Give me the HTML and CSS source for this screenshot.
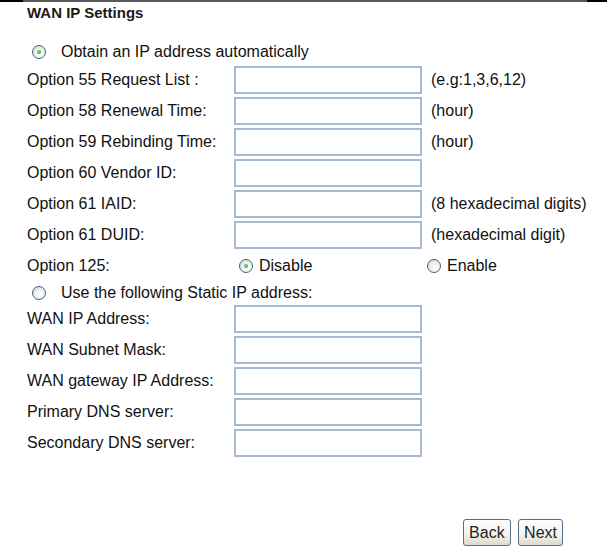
FILE: index.html
```html
<!DOCTYPE html>
<html lang="en">
<head>
    <meta charset="UTF-8">
    <title>WAN IP Settings</title>
    <link rel="stylesheet" href="styles.css">
</head>
<body>

<div class="topline"><div class="topline-inner"></div></div>

<div class="page">
    <div class="title">WAN IP Settings</div>

    <div class="radio-row first">
        <span class="radio checked"></span>
        <span class="radio-text">Obtain an IP address automatically</span>
    </div>

    <div class="row">
        <label>Option 55 Request List :</label>
        <input type="text">
        <span class="hint">(e.g:1,3,6,12)</span>
    </div>
    <div class="row">
        <label>Option 58 Renewal Time:</label>
        <input type="text">
        <span class="hint">(hour)</span>
    </div>
    <div class="row">
        <label>Option 59 Rebinding Time:</label>
        <input type="text">
        <span class="hint">(hour)</span>
    </div>
    <div class="row">
        <label>Option 60 Vendor ID:</label>
        <input type="text">
        <span class="hint"></span>
    </div>
    <div class="row">
        <label>Option 61 IAID:</label>
        <input type="text">
        <span class="hint">(8 hexadecimal digits)</span>
    </div>
    <div class="row">
        <label>Option 61 DUID:</label>
        <input type="text">
        <span class="hint">(hexadecimal digit)</span>
    </div>
    <div class="row option125">
        <label>Option 125:</label>
        <span class="choice first-choice"><span class="radio checked"></span>Disable</span>
        <span class="choice"><span class="radio"></span>Enable</span>
    </div>

    <div class="radio-row static">
        <span class="radio"></span>
        <span class="radio-text">Use the following Static IP address:</span>
    </div>

    <div class="row">
        <label>WAN IP Address:</label>
        <input type="text">
    </div>
    <div class="row">
        <label>WAN Subnet Mask:</label>
        <input type="text">
    </div>
    <div class="row">
        <label>WAN gateway IP Address:</label>
        <input type="text">
    </div>
    <div class="row">
        <label>Primary DNS server:</label>
        <input type="text">
    </div>
    <div class="row">
        <label>Secondary DNS server:</label>
        <input type="text">
    </div>

    <div class="actions">
        <button>Back</button>
        <button>Next</button>
    </div>
</div>

</body>
</html>
```

FILE: styles.css
```css
body {
    margin: 0;
    background: #fff;
    font-family: "Liberation Sans", Arial, sans-serif;
    font-size: 16px;
    color: #111;
}
.topline {
    height: 2px;
    background: #000;
    padding: 0 20px 0 23px;
}
.topline-inner {
    height: 2px;
    background: #5a5a5a;
}
.page {
    padding-left: 27px;
}
.title {
    font-size: 15px;
    font-weight: bold;
    line-height: 17px;
    padding-top: 2px;
    color: #1a1a1a;
}
.radio-row {
    display: flex;
    align-items: center;
    height: 22px;
    margin-bottom: 3px;
}
.radio-row.first {
    margin-top: 20px;
}
.radio-row.static {
    height: 19px;
}
.radio-row .radio {
    margin-left: 5px;
}
.radio-text {
    margin-left: 15px;
}
.radio {
    display: inline-block;
    width: 14px;
    height: 14px;
    box-sizing: border-box;
    border-radius: 50%;
    border: 1px solid #3d5f86;
    background: radial-gradient(circle at 60% 65%, #ffffff 0%, #f0f0ec 45%, #d0d0c8 100%);
    position: relative;
    flex-shrink: 0;
}
.radio.checked::after {
    content: "";
    position: absolute;
    left: 4px;
    top: 4px;
    width: 4px;
    height: 4px;
    border-radius: 50%;
    background: radial-gradient(circle at 40% 40%, #6fe26f, #1e9e1e);
}
.row {
    display: grid;
    grid-template-columns: 207px 188px auto;
    align-items: center;
    height: 28px;
    margin-bottom: 3px;
}
.row label {
    line-height: 18px;
}
.row input {
    width: 188px;
    height: 28px;
    box-sizing: border-box;
    border: 2px solid #a8bad0;
    margin: 0;
    padding: 2px 4px;
    font-family: inherit;
    font-size: 14px;
    background: #fff;
}
.hint {
    white-space: nowrap;
    margin-left: 9px;
}
.choice {
    display: flex;
    align-items: center;
}
.choice .radio {
    margin-right: 6px;
}
.first-choice {
    padding-left: 5px;
}
.option125 .choice:last-child {
    margin-left: 5px;
}
.actions {
    margin-top: 62px;
    text-align: right;
    padding-right: 44px;
}
.actions button {
    height: 27px;
    padding: 0 5px;
    margin-left: 3px;
    font-family: inherit;
    font-size: 16px;
    color: #222;
    border: 1px solid #4f6f95;
    border-radius: 3px;
    background: linear-gradient(#ffffff, #f2f1ea 60%, #dcd9cd);
}
```
